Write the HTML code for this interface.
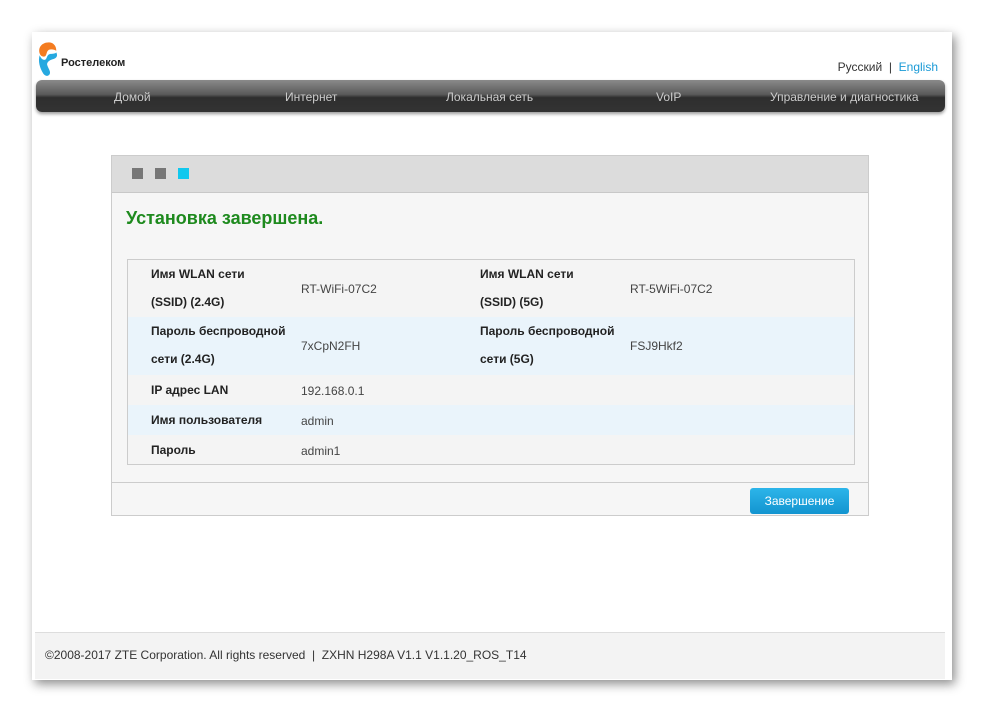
<!DOCTYPE html>
<html><head><meta charset="utf-8"><style>
*{margin:0;padding:0;box-sizing:border-box}
body{width:984px;height:712px;background:#fff;font-family:"Liberation Sans","Noto Sans CJK SC",sans-serif;position:relative;overflow:hidden}
.win{position:absolute;left:32px;top:32px;width:920px;height:648px;background:#fff;box-shadow:3px 4px 10px rgba(0,0,0,.45)}
.lang{position:absolute;right:14px;top:28px;font-size:12px;color:#333}
.lang span{color:#1a9ad6}
.nav{position:absolute;left:4px;top:48px;width:909px;height:32px;border-radius:6px;background:linear-gradient(#8a8a8a,#5a5a5a 45%,#2e2e2e 55%,#333);box-shadow:0 2px 3px rgba(0,0,0,.4)}
.nav div{position:absolute;top:10px;font-size:12px;color:#ccc}
.card{position:absolute;left:79px;top:123px;width:758px;height:361px;border:1px solid #ccc;background:#f6f6f6}
.ch{height:37px;background:#dcdcdc;border-bottom:1px solid #c8c8c8;position:relative}
.sq{position:absolute;top:12px;width:11px;height:11px;background:#777}
h1{position:absolute;left:14px;top:52px;font-size:18px;color:#1e8a1e;font-weight:bold}
.tb{position:absolute;left:15px;top:103px;width:728px;height:206px;border:1px solid #ccc;background:#f4f4f4}
.r{position:absolute;left:0;width:726px}
.b{position:absolute;font-size:12px;font-weight:bold;color:#222;line-height:28px}
.v{position:absolute;font-size:12px;color:#444}
.ft{position:absolute;left:0;top:326px;width:756px;border-top:1px solid #ccc}
.btn{position:absolute;left:638px;top:332px;width:99px;height:26px;border-radius:3px;background:linear-gradient(#2cb5ea,#1394d0);color:#fff;font-size:12px;text-align:center;line-height:26px}
.foot{position:absolute;left:3px;top:600px;width:910px;height:47px;background:#f3f3f3;border-top:1px solid #ddd;font-size:12px;color:#333;padding:15px 0 0 10px}
</style></head><body>
<div class="win">
<svg style="position:absolute;left:4px;top:7px" width="24" height="40" viewBox="0 0 26 40"><path d="M14 2C6 2 2 8 4 14c1 3 4 4 6 3 2-2 1-5 4-7 3-1 6 0 8 1C22 5 18 2 14 2z" fill="#f47c20"/><path d="M4 16c-2 6 0 14 4 20 2 3 6 3 7 0 1-3-2-6-3-10 0-3 3-5 7-6 3-1 5-3 3-7-2 2-6 1-8 2-3 2-2 6-5 6-2 0-4-2-5-5z" fill="#26a9e0"/></svg>
<div style="position:absolute;left:29px;top:25px;font-size:11px;font-weight:bold;color:#222">Ростелеком</div>
<div class="lang">Русский &nbsp;|&nbsp; <span>English</span></div>
<div class="nav"><div style="left:78px">Домой</div><div style="left:249px">Интернет</div><div style="left:410px">Локальная сеть</div><div style="left:620px">VoIP</div><div style="left:734px">Управление и диагностика</div></div>
<div class="card">
<div class="ch"><div class="sq" style="left:20px"></div><div class="sq" style="left:43px"></div><div class="sq" style="left:66px;background:#11c8ee"></div></div>
<h1>Установка завершена.</h1>
<div class="tb">
<div class="r" style="top:0;height:57px;background:#f4f4f4"><div class="b" style="left:23px;top:0">Имя WLAN сети<br>(SSID) (2.4G)</div><div class="v" style="left:173px;top:22px">RT-WiFi-07C2</div><div class="b" style="left:352px;top:0">Имя WLAN сети<br>(SSID) (5G)</div><div class="v" style="left:502px;top:22px">RT-5WiFi-07C2</div></div>
<div class="r" style="top:57px;height:58px;background:#eaf4fb"><div class="b" style="left:23px;top:0">Пароль беспроводной<br>сети (2.4G)</div><div class="v" style="left:173px;top:22px">7xCpN2FH</div><div class="b" style="left:352px;top:0">Пароль беспроводной<br>сети (5G)</div><div class="v" style="left:502px;top:22px">FSJ9Hkf2</div></div>
<div class="r" style="top:115px;height:30px;background:#f4f4f4"><div class="b" style="left:23px;top:1px">IP адрес LAN</div><div class="v" style="left:173px;top:9px">192.168.0.1</div></div>
<div class="r" style="top:145px;height:30px;background:#eaf4fb"><div class="b" style="left:23px;top:1px">Имя пользователя</div><div class="v" style="left:173px;top:9px">admin</div></div>
<div class="r" style="top:175px;height:29px;background:#f4f4f4"><div class="b" style="left:23px;top:1px">Пароль</div><div class="v" style="left:173px;top:9px">admin1</div></div>
</div>
<div class="ft"></div>
<div class="btn">Завершение</div>
</div>
<div class="foot">©2008-2017 ZTE Corporation. All rights reserved &nbsp;| &nbsp;ZXHN H298A V1.1 V1.1.20_ROS_T14</div>
</div>
</body></html>
